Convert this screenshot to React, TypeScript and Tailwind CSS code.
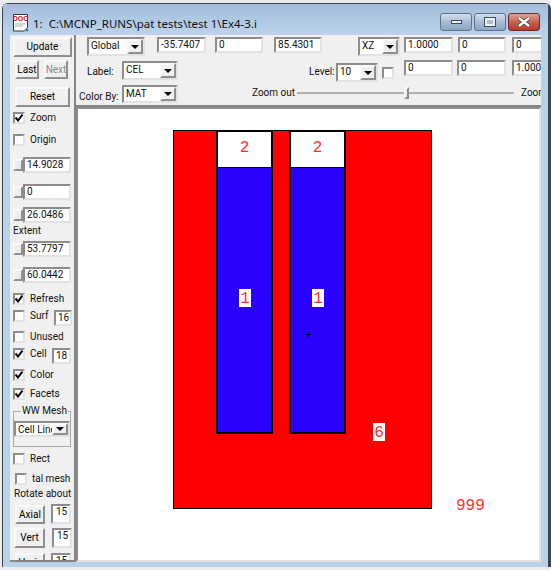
import type { ReactNode } from 'react'

const sunken = 'border-2 border-t-[#8c8c8c] border-l-[#8c8c8c] border-r-[#e2e2e2] border-b-[#e2e2e2]'
const raised = 'border-2 border-t-[#fafafa] border-l-[#fafafa] border-r-[#8f8f8f] border-b-[#8f8f8f]'

function Field({ value, className }: { value: string; className: string }) {
  return (
    <div className={`${sunken} ${className} shrink-0 bg-white overflow-hidden pl-[2px] leading-[12px] whitespace-nowrap`}>
      {value}
    </div>
  )
}

function Btn({ label, className, disabled }: { label: string; className: string; disabled?: boolean }) {
  return (
    <div className={`${raised} ${className} shrink-0 flex items-center justify-center bg-[#f0f0f0] ${disabled ? 'text-[#8a8a8a]' : 'text-black'}`}>
      {label}
    </div>
  )
}

function Combo({ value, className }: { value: string; className: string }) {
  return (
    <div className={`${sunken} ${className} shrink-0 flex bg-white`}>
      <div className="flex-1 overflow-hidden pl-[2px] pt-[1px] leading-[12px] whitespace-nowrap">{value}</div>
      <div className={`${raised} w-[16px] bg-[#f0f0f0] flex items-center justify-center`}>
        <svg width="8" height="4" viewBox="0 0 8 4">
          <path d="M0 0h8L4 4z" fill="#000" />
        </svg>
      </div>
    </div>
  )
}

function Check({ label, checked, className }: { label: string; checked?: boolean; className: string }) {
  return (
    <div className={`${className} shrink-0 flex items-center h-[12px]`}>
      <div className={`${sunken} w-[12px] h-[12px] bg-white flex items-center justify-center`}>
        {checked && (
          <svg width="8" height="8" viewBox="0 0 8 8">
            <path d="M0.5 3.5L3 6.5L7.5 0.5" fill="none" stroke="#000" strokeWidth="2" />
          </svg>
        )}
      </div>
      {label && <span className="ml-[5px] whitespace-nowrap">{label}</span>}
    </div>
  )
}

function SpinField({ value, className }: { value: string; className: string }) {
  return (
    <div className={`${className} shrink-0 ml-[3px] flex items-center h-[16px]`}>
      <div className={`${raised} w-[10px] h-[12px] bg-[#ececec]`} />
      <Field value={value} className="w-[48px] h-[16px]" />
    </div>
  )
}

function Row({ className, children }: { className: string; children: ReactNode }) {
  return <div className={`${className} shrink-0 flex items-start`}>{children}</div>
}

function LeftPanel() {
  return (
    <div className="w-[66px] shrink-0 flex flex-col overflow-hidden bg-[#f0f0f0] border-r-2 border-b-2 border-[#858585] text-[10px] leading-[12px] text-[#111]">
      <Btn label="Update" className="mt-[2px] ml-[3px] w-[59px] h-[20px]" />
      <Row className="mt-[3px] ml-[5px] gap-[5px]">
        <Btn label="Last" className="w-[24px] h-[19px]" />
        <Btn label="Next" className="w-[24px] h-[19px]" disabled />
      </Row>
      <Btn label="Reset" className="mt-[8px] ml-[5px] w-[55px] h-[20px]" />
      <Check label="Zoom" checked className="mt-[5px] ml-[3px]" />
      <Check label="Origin" className="mt-[10px] ml-[3px]" />
      <SpinField value="14.9028" className="mt-[11px]" />
      <SpinField value="0" className="mt-[11px]" />
      <SpinField value="26.0486" className="mt-[7px]" />
      <div className="mt-[2px] ml-[3px] shrink-0">Extent</div>
      <SpinField value="53.7797" className="mt-[4px]" />
      <SpinField value="60.0442" className="mt-[10px]" />
      <Check label="Refresh" checked className="mt-[10px] ml-[3px]" />
      <Row className="mt-[5px] ml-[3px] h-[16px] items-center">
        <Check label="Surf" className="w-[41px]" />
        <Field value="16" className="w-[18px] h-[16px]" />
      </Row>
      <Check label="Unused" className="mt-[5px] ml-[3px]" />
      <Row className="mt-[5px] ml-[3px] h-[16px] items-center">
        <Check label="Cell" checked className="w-[39px]" />
        <Field value="18" className="w-[19px] h-[16px]" />
      </Row>
      <Check label="Color" checked className="mt-[5px] ml-[3px]" />
      <Check label="Facets" checked className="mt-[7px] ml-[3px]" />
      <fieldset className="mt-[5px] ml-[3px] w-[58px] h-[42px] shrink-0 border border-[#a8a8a8]">
        <legend className="ml-[7px] px-[1px] leading-[12px] whitespace-nowrap">WW Mesh</legend>
        <Combo value="Cell Line" className="mt-[4px] w-[56px] h-[16px]" />
      </fieldset>
      <Check label="Rect" className="mt-[6px] ml-[3px]" />
      <Check label="tal mesh" className="mt-[8px] ml-[5px]" />
      <div className="mt-[3px] ml-[4px] shrink-0 whitespace-nowrap">Rotate about</div>
      <Row className="mt-[4px] ml-[5px]">
        <Btn label="Axial" className="mt-[1px] w-[30px] h-[19px]" />
        <Field value="15" className="ml-[6px] w-[20px] h-[20px] pl-[3px]" />
      </Row>
      <Row className="mt-[4px] ml-[4px]">
        <Btn label="Vert" className="w-[31px] h-[20px]" />
        <Field value="15" className="ml-[7px] w-[20px] h-[20px] pl-[3px]" />
      </Row>
      <Row className="mt-[5px] ml-[5px]">
        <Btn label="Horiz" className="w-[30px] h-[20px]" />
        <Field value="15" className="ml-[6px] w-[20px] h-[20px] pl-[3px]" />
      </Row>
    </div>
  )
}

function Toolbar() {
  return (
    <div className="h-[72px] shrink-0 flex flex-col overflow-hidden bg-[#f0f0f0] border-b-2 border-[#858585] text-[10px] leading-[12px] text-[#111]">
      <Row className="mt-[2px] h-[19px]">
        <Combo value="Global" className="ml-[11px] w-[58px] h-[19px]" />
        <Field value="-35.7407" className="ml-[12px] w-[49px] h-[16px]" />
        <Field value="0" className="ml-[9px] w-[48px] h-[16px]" />
        <Field value="85.4301" className="ml-[11px] w-[48px] h-[16px]" />
        <Combo value="XZ" className="ml-[36px] w-[42px] h-[19px]" />
        <Field value="1.0000" className="ml-[4px] w-[49px] h-[16px]" />
        <Field value="0" className="ml-[5px] w-[48px] h-[16px]" />
        <Field value="0" className="ml-[6px] w-[48px] h-[16px]" />
      </Row>
      <Row className="mt-[4px] h-[22px]">
        <div className="ml-[11px] mt-[6px] w-[35px] shrink-0">Label:</div>
        <Combo value="CEL" className="mt-[1px] w-[56px] h-[19px]" />
        <div className="ml-[131px] mt-[6px] w-[27px] shrink-0">Level:</div>
        <Combo value="10" className="mt-[3px] w-[42px] h-[19px]" />
        <Check label="" className="ml-[4px] mt-[7px]" />
        <Field value="0" className="ml-[10px] w-[49px] h-[16px]" />
        <Field value="0" className="ml-[4px] w-[49px] h-[16px]" />
        <Field value="1.000" className="ml-[6px] w-[48px] h-[16px]" />
      </Row>
      <Row className="mt-[3px] h-[18px]">
        <div className="ml-[3px] mt-[6px] w-[43px] shrink-0 whitespace-nowrap">Color By:</div>
        <Combo value="MAT" className="w-[56px] h-[18px]" />
        <div className="ml-[74px] mt-[2px] w-[45px] shrink-0 whitespace-nowrap">Zoom out</div>
        <div className="w-[217px] h-[14px] mt-[1px] flex items-center shrink-0">
          <div className="w-[107px] h-[2px] bg-[#b0b0b0]" />
          <div className={`${raised} w-[5px] h-[12px] bg-[#e4e4e4]`} />
          <div className="flex-1 h-[2px] bg-[#b0b0b0]" />
        </div>
        <div className="ml-[7px] mt-[2px] shrink-0">Zoom in</div>
      </Row>
    </div>
  )
}

function Plot() {
  const labelFont = { fontFamily: '"Liberation Mono", monospace', fontSize: 16 }
  return (
    <svg width="462" height="453" viewBox="78 109 462 453" className="block">
      <rect x="173.5" y="130.5" width="258" height="378" fill="#ff0000" stroke="#000" />
      {[217, 290].map((x) => (
        <g key={x}>
          <rect x={x} y="131" width="55" height="302" fill="#2a00ff" stroke="#000" strokeWidth="2" />
          <rect x={x + 1} y="132" width="53" height="35" fill="#fff" />
          <rect x={x + 1} y="167" width="53" height="1" fill="#000" />
          <text x={x + 27.5} y="152" textAnchor="middle" fill="#ff3030" style={labelFont}>2</text>
          <rect x={x + 22} y="289" width="12" height="18" fill="#fff" />
          <text x={x + 28} y="303" textAnchor="middle" fill="#ff3030" style={labelFont}>1</text>
        </g>
      ))}
      <path d="M305 334.5h6M308.5 333v4" stroke="#000" />
      <rect x="373" y="423" width="12" height="18" fill="#fff" />
      <text x="379" y="437" textAnchor="middle" fill="#ff3030" style={labelFont}>6</text>
      <text x="456" y="510" fill="#ff3030" style={labelFont}>999</text>
    </svg>
  )
}

function WindowButton({ className, children }: { className: string; children: ReactNode }) {
  return (
    <div className={`${className} w-[32px] h-[18px] rounded-[3px] border flex items-center justify-center`}>
      {children}
    </div>
  )
}

export default function App() {
  return (
    <div className="w-[551px] h-[570px] flex flex-col bg-[#ececec] pl-[2px] pt-[3px] pb-[3px] overflow-hidden" style={{ fontFamily: 'Roboto, sans-serif' }}>
      <div className="flex-1 min-h-0 flex flex-col rounded-t-[6px] border-t border-l border-r-[3px] border-[#3b4650] bg-[#b9d1ea] pl-[7px] pr-[7px] pb-[5px]">
        <div className="h-[31px] shrink-0 flex items-start bg-gradient-to-b from-[#a3bedb] to-[#bcd3ea] -mx-[7px] pl-[9px] pr-[7px]">
          <svg width="18" height="18" viewBox="0 0 18 18" className="mt-[10px] shrink-0">
            <path d="M1.5 0.5h14v13l-3 3.5h-11z" fill="#fff" stroke="#333" />
            <text x="8.5" y="7" textAnchor="middle" fontSize="7" fontWeight="bold" fill="#e01010" style={{ fontFamily: '"Liberation Sans", sans-serif' }}>DOC</text>
            <path d="M3 10h10M3 12h8" stroke="#aaa" />
            <path d="M14 15l2 2" stroke="#1a8a8a" strokeWidth="2" />
          </svg>
          <div className="ml-[3px] mt-[11px] leading-[18px] text-[#101010] whitespace-nowrap" style={{ fontFamily: '"Noto Sans", sans-serif', fontSize: 11.5 }}>1:&nbsp; C:\MCNP_RUNS\pat tests\test 1\Ex4-3.i</div>
          <div className="ml-auto mt-[9px] flex gap-[2px] mr-[1px]">
            <WindowButton className="border-[#5d7188] bg-gradient-to-b from-[#d3e0ee] via-[#a9bdd4] to-[#8ba5c4]">
              <div className="w-[11px] h-[4px] bg-[#eef2f7] border border-[#3e4b5a]" />
            </WindowButton>
            <WindowButton className="border-[#5d7188] bg-gradient-to-b from-[#d3e0ee] via-[#a9bdd4] to-[#8ba5c4]">
              <div className="w-[10px] h-[8px] bg-[#a9bdd4] border-2 border-[#eef2f7] outline outline-1 outline-[#3e4b5a]" />
            </WindowButton>
            <WindowButton className="border-[#6b2a28] bg-gradient-to-b from-[#dfa59c] via-[#c8604f] to-[#b23c2c]">
              <svg width="14" height="10" viewBox="0 0 14 10">
                <path d="M2 1l10 8M12 1L2 9" stroke="#3c3c3c" strokeWidth="3.6" />
                <path d="M2 1l10 8M12 1L2 9" stroke="#fff" strokeWidth="2.4" />
              </svg>
            </WindowButton>
          </div>
        </div>
        <div className="flex-1 min-h-0 flex">
          <LeftPanel />
          <div className="flex-1 min-w-0 flex flex-col">
            <Toolbar />
            <div className={`${sunken} flex-1 min-h-0 bg-white overflow-hidden`}>
              <Plot />
            </div>
          </div>
        </div>
      </div>
    </div>
  )
}
